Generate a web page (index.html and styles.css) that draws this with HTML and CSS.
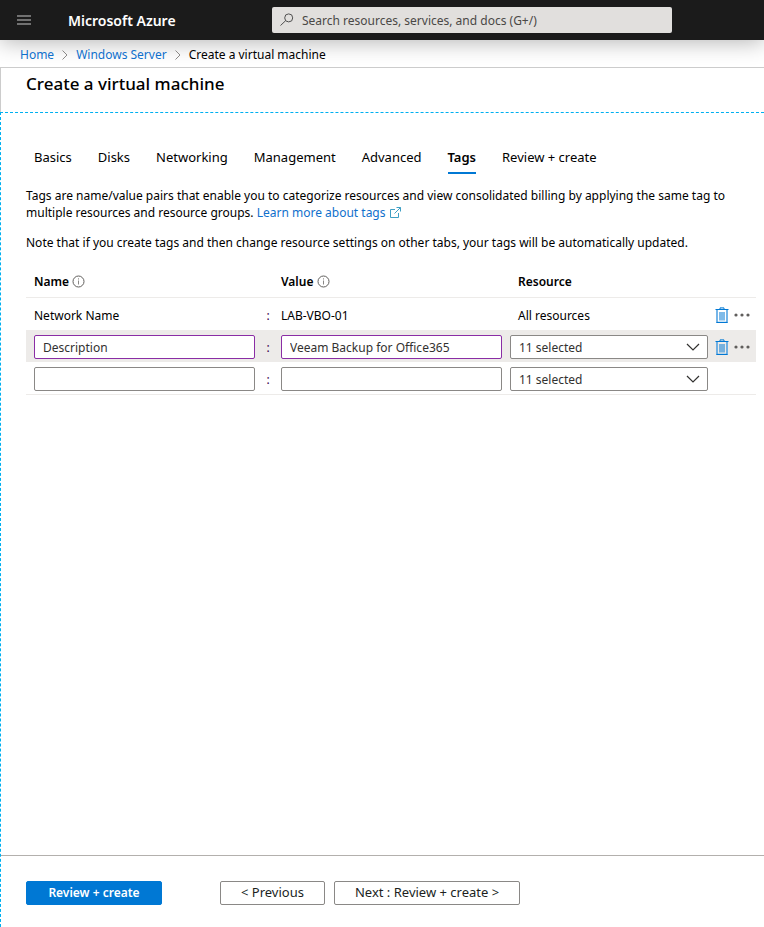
FILE: index.html
```html
<!DOCTYPE html>
<html lang="en">
<head>
<meta charset="utf-8">
<meta name="viewport" content="width=device-width, initial-scale=1">
<title>Create a virtual machine - Microsoft Azure</title>
<link rel="stylesheet" href="styles.css">
</head>
<body>
<svg class="sprite" aria-hidden="true">
  <symbol id="icon-info" viewBox="0 0 13 13">
    <circle cx="6.5" cy="6.5" r="5.5" fill="none" stroke="#605e5c"/>
    <path d="M6.5 5.5v4M6.5 3.3v1.2" fill="none" stroke="#8a8886"/>
  </symbol>
  <symbol id="icon-trash" viewBox="0 0 14 16">
    <path d="M5 2.5v-1.6h4v1.6M0.5 2.5h13" fill="none" stroke="#0078d4"/>
    <path d="M2 3v12.5h10V3" fill="none" stroke="#3c97df" stroke-width="1.4"/>
    <path d="M1.500 15.500h11" fill="none" stroke="#0078d4"/>
    <path d="M4 5h6v8.500h-6z" fill="#0078d4" fill-opacity=".5"/>
  </symbol>
  <symbol id="icon-more" viewBox="0 0 16 4">
    <circle cx="2" cy="2" r="1.6"/><circle cx="8" cy="2" r="1.6"/><circle cx="14" cy="2" r="1.6"/>
  </symbol>
  <symbol id="icon-chevron-down" viewBox="0 0 14 8">
    <path d="M1 1l6 6 6-6" fill="none" stroke="#323130" stroke-width="1.2"/>
  </symbol>
  <symbol id="icon-chevron-right" viewBox="0 0 6 10">
    <path d="M.5.5L5 5 .5 9.500" fill="none" stroke="#8a8886"/>
  </symbol>
</svg>

<header class="topbar">
  <button class="menu-button" type="button" aria-label="Show portal menu">
    <svg class="menu-icon" viewBox="0 0 14 10" aria-hidden="true"><path d="M0 1h14M0 5h14M0 9h14" stroke="#8f8f8f" stroke-width="1.500"/></svg>
  </button>
  <a class="brand" href="#">Microsoft Azure</a>
  <label class="search">
    <svg class="search-icon" viewBox="0 0 14 14" aria-hidden="true"><path d="M.5 12.500l5-4.700" fill="none" stroke="#505050"/><circle cx="8.700" cy="4.900" r="4" fill="none" stroke="#505050"/></svg>
    <input class="search-input" type="text" aria-label="Search" placeholder="Search resources, services, and docs (G+/)">
  </label>
</header>

<nav class="breadcrumb" aria-label="Breadcrumb">
  <a href="#">Home</a>
  <svg class="crumb-arrow" aria-hidden="true"><use href="#icon-chevron-right"/></svg>
  <a href="#">Windows Server</a>
  <svg class="crumb-arrow" aria-hidden="true"><use href="#icon-chevron-right"/></svg>
  <span>Create a virtual machine</span>
</nav>

<div class="blade-title"><h1>Create a virtual machine</h1></div>

<div class="blade">
  <main class="content">
    <nav class="tabs" aria-label="Steps">
      <a class="tab" href="#">Basics</a>
      <a class="tab" href="#">Disks</a>
      <a class="tab" href="#">Networking</a>
      <a class="tab" href="#">Management</a>
      <a class="tab" href="#">Advanced</a>
      <a class="tab tab-active" href="#" aria-current="step">Tags</a>
      <a class="tab" href="#">Review + create</a>
    </nav>

    <p class="intro">Tags are name/value pairs that enable you to categorize resources and view consolidated billing by applying the same tag to multiple resources and resource groups. <a class="learn-more" href="#">Learn more about tags <svg class="external-icon" viewBox="0 0 11 11" aria-hidden="true"><path d="M5 2.500H.5v8h8V6M6.500.5h4v4M10.500.5L4.500 6.500" fill="none" stroke="#3f9fc4"/></svg></a></p>
    <p class="intro">Note that if you create tags and then change resource settings on other tabs, your tags will be automatically updated.</p>

    <table class="tags">
      <colgroup><col class="col-name"><col class="col-colon"><col class="col-value"><col class="col-resource"><col class="col-actions"></colgroup>
      <thead>
        <tr>
          <th class="name">Name <svg class="info-icon" aria-hidden="true"><use href="#icon-info"/></svg></th>
          <th></th>
          <th>Value <svg class="info-icon" aria-hidden="true"><use href="#icon-info"/></svg></th>
          <th class="resource-text">Resource</th>
          <th></th>
        </tr>
      </thead>
      <tbody>
        <tr>
          <td class="name">Network Name</td>
          <td class="colon">:</td>
          <td>LAB-VBO-01</td>
          <td class="resource-text">All resources</td>
          <td><div class="actions">
            <button type="button" aria-label="Delete"><svg class="trash-icon" aria-hidden="true"><use href="#icon-trash"/></svg></button>
            <button type="button" aria-label="More"><svg class="more-icon" aria-hidden="true"><use href="#icon-more"/></svg></button>
          </div></td>
        </tr>
        <tr class="current">
          <td class="name"><input class="field edited" type="text" aria-label="Name" value="Description"></td>
          <td class="colon">:</td>
          <td class="value"><input class="field edited" type="text" aria-label="Value" value="Veeam Backup for Office365"></td>
          <td><div class="dropdown">
            <select class="field" aria-label="Resource"><option>11 selected</option></select>
            <svg class="dropdown-icon" aria-hidden="true"><use href="#icon-chevron-down"/></svg>
          </div></td>
          <td><div class="actions">
            <button type="button" aria-label="Delete"><svg class="trash-icon" aria-hidden="true"><use href="#icon-trash"/></svg></button>
            <button type="button" aria-label="More"><svg class="more-icon" aria-hidden="true"><use href="#icon-more"/></svg></button>
          </div></td>
        </tr>
        <tr>
          <td class="name"><input class="field" type="text" aria-label="Name"></td>
          <td class="colon">:</td>
          <td class="value"><input class="field" type="text" aria-label="Value"></td>
          <td><div class="dropdown">
            <select class="field" aria-label="Resource"><option>11 selected</option></select>
            <svg class="dropdown-icon" aria-hidden="true"><use href="#icon-chevron-down"/></svg>
          </div></td>
          <td></td>
        </tr>
      </tbody>
    </table>
  </main>

  <footer class="footer">
    <button class="button primary" type="button">Review + create</button>
    <button class="button" type="button">&lt; Previous</button>
    <button class="button" type="button">Next : Review + create &gt;</button>
  </footer>
</div>
</body>
</html>
```
FILE: styles.css
```css
* {
  box-sizing: border-box;
}

body {
  display: flex;
  flex-direction: column;
  min-height: 100vh;
  margin: 0;
  background: #fff;
  color: #000;
  font: 12px/17px "Segoe UI", "Noto Sans", "Open Sans", sans-serif;
}

a {
  color: #0f70cc;
  text-decoration: none;
}

button,
input,
select {
  font: inherit;
}

svg {
  flex: none;
}

.sprite {
  position: absolute;
  width: 0;
  height: 0;
}

/* Top bar */

.topbar {
  display: flex;
  align-items: center;
  height: 40px;
  background: #1b1b1b;
  box-shadow: 0 2px 22px rgba(0, 0, 0, 0.3);
}

.menu-button {
  display: flex;
  align-items: center;
  justify-content: center;
  width: 48px;
  height: 40px;
  padding: 0;
  border: 0;
  background: none;
}

.menu-icon {
  width: 14px;
  height: 10px;
}

.brand {
  width: 204px;
  margin-left: 20px;
  color: #fff;
  font-size: 14px;
  font-weight: 600;
}

.search {
  display: flex;
  flex: 0 1 400px;
  align-items: center;
  gap: 8px;
  height: 26px;
  padding: 0 8px;
  border-radius: 2px;
  background: #e1dfdd;
}

.search-icon {
  width: 14px;
  height: 14px;
}

.search-input {
  flex: 1;
  min-width: 0;
  padding: 0;
  border: 0;
  outline: 0;
  background: none;
}

.search-input::placeholder {
  color: #4a4846;
  opacity: 1;
}

/* Breadcrumb and title */

.breadcrumb {
  display: flex;
  align-items: center;
  gap: 8px;
  height: 27px;
  padding: 2px 20px 0;
}

.crumb-arrow {
  width: 6px;
  height: 10px;
}

.blade-title {
  height: 45px;
  padding: 6px 25px 0;
  border-top: 1px solid #ccc;
  border-left: 1px solid #ccc;
}

h1 {
  margin: 0;
  font-size: 17px;
  font-weight: 500;
  line-height: 20px;
}

/* Blade */

.blade {
  display: flex;
  flex: 1;
  flex-direction: column;
  border-top: 1px dashed #00b0f0;
  border-left: 1px dashed #00b0f0;
}

.content {
  flex: 1;
  padding: 32px 8px 24px 25px;
}

.tabs {
  display: flex;
  gap: 26px;
  padding-left: 8px;
  margin-bottom: 13px;
  font-size: 13px;
}

.tab {
  height: 29px;
  padding-top: 4px;
  color: #000;
  white-space: nowrap;
}

.tab-active {
  border-bottom: 2px solid #0078d4;
  font-weight: 600;
}

.intro {
  margin: 0 0 13px;
}

.learn-more {
  display: inline-block;
}

.external-icon {
  width: 11px;
  height: 11px;
  margin-left: 1px;
  vertical-align: -1px;
}

/* Tags table */

.tags {
  width: 100%;
  margin-top: 14px;
  border-bottom: 1px solid #edebe9;
  border-spacing: 0;
  table-layout: fixed;
}

.col-colon {
  width: 26px;
}

.col-resource {
  width: 198px;
}

.col-actions {
  width: 48px;
}

.tags th,
.tags td {
  height: 32px;
  padding: 2px 0 0;
  text-align: left;
}

.tags th {
  height: 33px;
  padding-top: 0;
  border-bottom: 1px solid #edebe9;
  font-weight: 600;
}

.tags .name {
  padding-left: 8px;
}

.tags .value {
  padding-right: 8px;
}

.tags .colon {
  color: #400050;
  text-align: center;
}

.tags .resource-text {
  padding-left: 8px;
}

.current {
  background: #edebe9;
}

.info-icon {
  width: 13px;
  height: 13px;
  vertical-align: -2px;
}

.field {
  display: block;
  width: 100%;
  height: 24px;
  padding: 0 8px;
  border: 1px solid #8a8886;
  border-radius: 2px;
  background: #fff;
  color: #323130;
  appearance: none;
}

.edited {
  border-color: #8a2da5;
}

.dropdown {
  position: relative;
}

.dropdown-icon {
  position: absolute;
  top: 8px;
  right: 8px;
  width: 14px;
  height: 8px;
  pointer-events: none;
}

.actions {
  display: flex;
  align-items: center;
  gap: 4px;
  padding-left: 7px;
}

.actions button {
  display: flex;
  padding: 0;
  border: 0;
  background: none;
}

.trash-icon {
  width: 14px;
  height: 16px;
}

.more-icon {
  width: 18px;
  height: 4px;
  fill: #605e5c;
}

/* Footer */

.footer {
  display: flex;
  gap: 9px;
  padding: 25px 25px 22px;
  border-top: 1px solid #b3b0ad;
}

.button {
  height: 24px;
  padding: 0 20px 2px;
  border: 1px solid #8a8886;
  border-radius: 2px;
  background: #fff;
  color: #201f1e;
  font-size: 13px;
}

.primary {
  min-width: 136px;
  margin-right: 49px;
  border-color: #0078d4;
  background: #0078d4;
  color: #fff;
  font-size: 12px;
  font-weight: 600;
}
```
